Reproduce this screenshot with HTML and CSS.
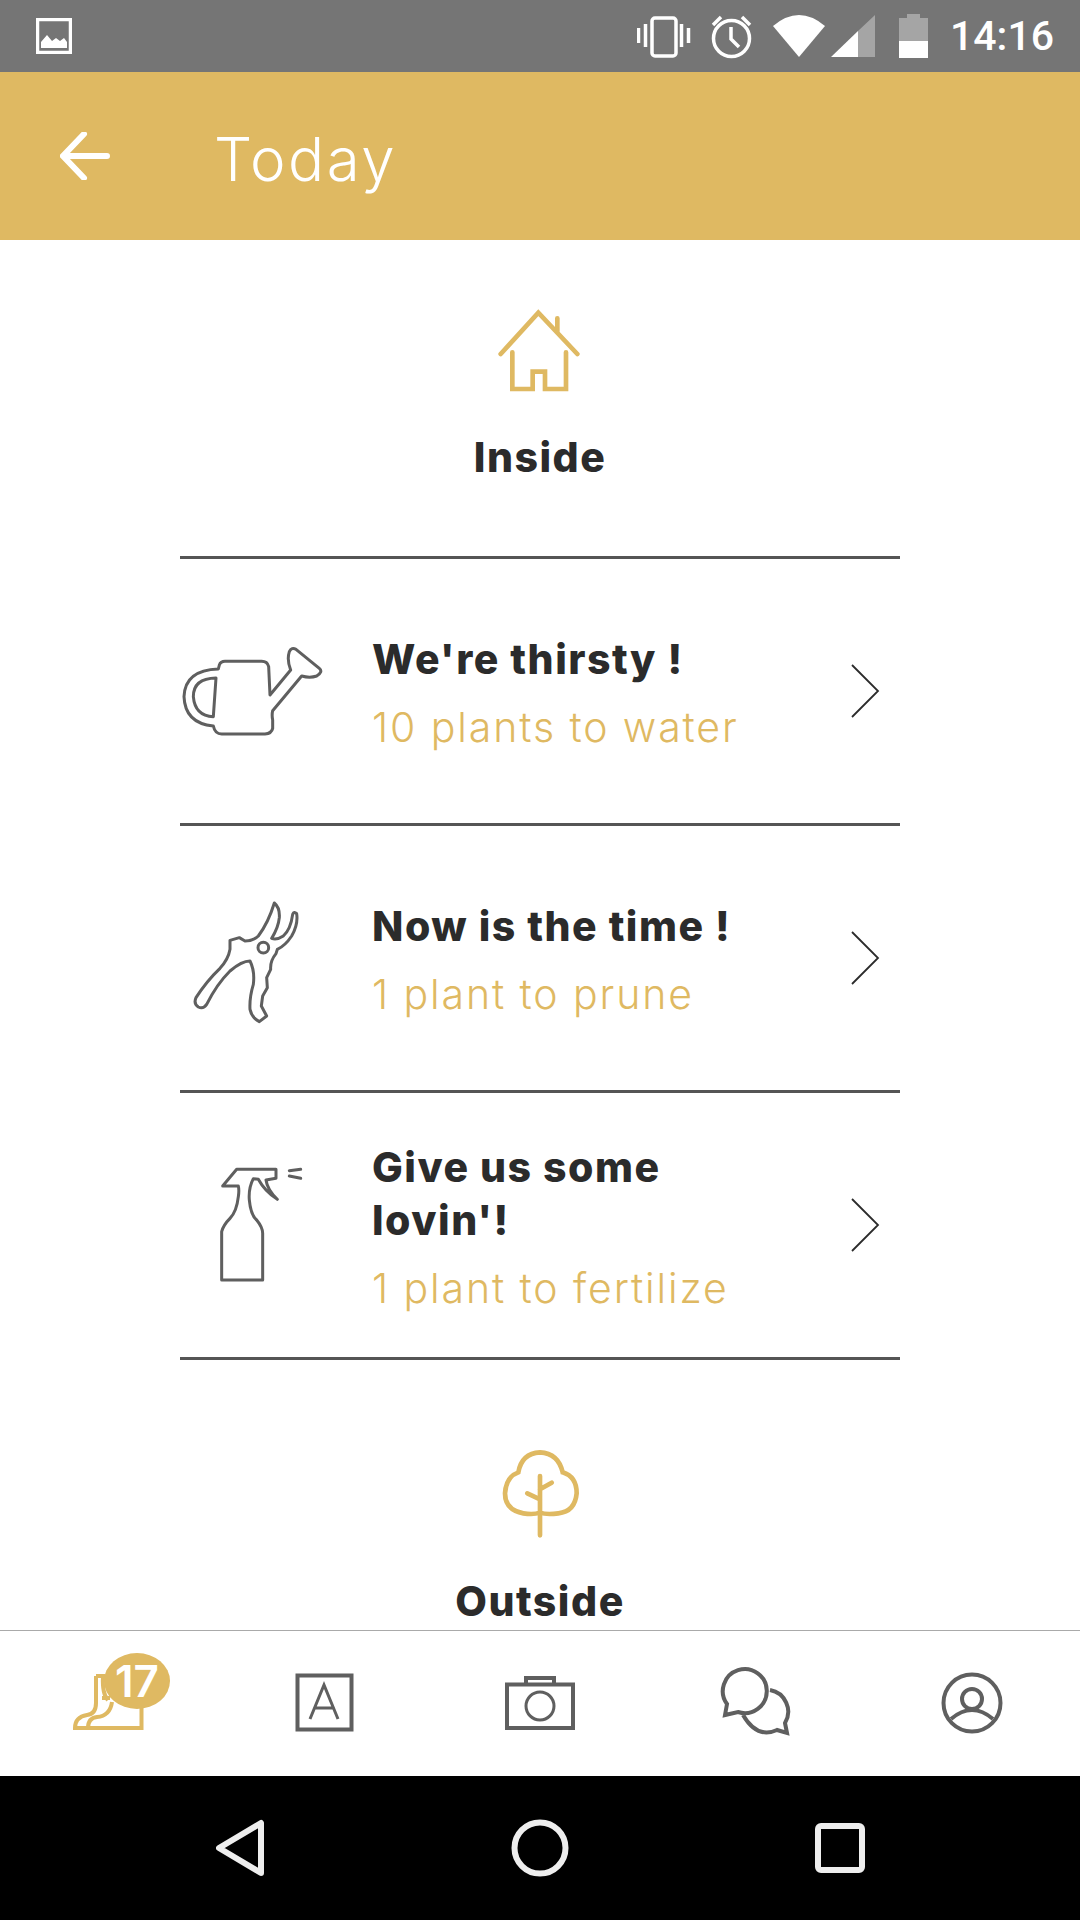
FILE: index.html
```html
<!DOCTYPE html>
<html lang="en">
<head>
<meta charset="utf-8">
<title>Today</title>
<link rel="stylesheet" href="styles.css">
</head>
<body>
<div class="app">
  <div class="statusbar">
    <svg class="st-image" viewBox="36 18 36 36"><rect x="37.500" y="19.500" width="33" height="33" class="w-line"/><path class="w-fill" d="M41 48V42L47 35L52 41L56 38L60 41L64 38L67 42V48Z"/></svg>
    <div class="st-right">
      <svg class="st-icons" viewBox="637 0 291 72">
        <rect x="652" y="18" width="24" height="38" rx="3" class="w-line"/>
        <path class="w-line" d="M638.500 28V43M645.500 24V47M681.500 24V47M688.500 28V43"/>
        <circle cx="731.500" cy="38.500" r="18" class="w-line"/>
        <path class="w-line" d="M731 27V39L739 47M713 25L721 17M750 25L742 17"/>
        <path class="w-fill" d="M773 26Q799 4 825 26L799 57Z"/>
        <path class="w-dim" d="M858 31L875 15V57H858Z"/>
        <path class="w-fill" d="M831 57L858 31V57Z"/>
        <path class="w-dim" d="M907 14H920V18H928V41H899V18H907Z"/>
        <rect x="899" y="41" width="29" height="17" class="w-fill"/>
      </svg>
      <span class="st-time">14:16</span>
    </div>
  </div>

  <header class="topbar">
    <svg class="back" viewBox="0 0 50 48"><path d="M47 24H4M24 2L3 24L24 46"/></svg>
    <h1 class="title">Today</h1>
  </header>

  <main class="content">
    <section class="group-head">
      <svg class="head-icon" viewBox="480 300 120 120"><g transform="translate(460 290) scale(.33333)"><path d="M122 192L235 68L352 192M292 85V125M157 187V297H218V245H255V297H318V187"/></g></svg>
      <h2 class="group-title">Inside</h2>
    </section>

    <ul class="tasks">
      <li class="task">
        <svg class="task-icon" viewBox="180 621 160 140"><g transform="translate(160 620) scale(.33333)"><path d="M178 135Q182 124 195 124H305Q322 124 326 140L330 225L392 150Q380 120 388 95Q395 80 408 88L478 145Q490 155 470 168Q450 175 425 168L338 272Q335 285 338 300V325Q335 340 315 342H185Q165 342 160 318Q75 310 72 230Q75 150 175 147ZM168 174Q100 175 100 230Q105 288 160 290Z"/></g></svg>
        <div class="task-text"><div class="task-title">We're thirsty !</div><div class="task-sub">10 plants to water</div></div>
        <svg class="chevron" viewBox="0 0 30 54"><path d="M2 1L28 27L2 53"/></svg>
      </li>
      <li class="task">
        <svg class="task-icon" viewBox="180 887 160 140"><g transform="translate(170 880) scale(.33333)"><path d="M313 66Q330 80 328 110Q325 140 305 172Q320 178 340 165Q362 145 368 100Q372 90 380 98Q385 130 365 165Q345 195 322 205L318 218Q300 240 302 265L290 290L292 320L278 345L274 375L290 405L268 422Q245 410 240 385Q238 350 250 310Q255 270 240 240Q215 240 180 270Q140 310 110 370Q100 385 85 378Q70 368 78 350Q110 300 150 262Q175 235 180 205V178L208 170L225 180Q250 180 265 165Q295 125 313 66Z"/><circle cx="280" cy="200" r="16"/></g></svg>
        <div class="task-text"><div class="task-title">Now is the time !</div><div class="task-sub">1 plant to prune</div></div>
        <svg class="chevron" viewBox="0 0 30 54"><path d="M2 1L28 27L2 53"/></svg>
      </li>
      <li class="task">
        <svg class="task-icon" viewBox="180 1155 160 140"><g transform="translate(190 1140) scale(.33333)"><path d="M140 88H258V115L228 120Q232 150 262 178Q225 155 205 118L190 116Q175 145 178 180Q182 225 200 240Q218 262 218 280V420H95V275Q100 255 120 235Q140 215 145 170Q148 150 145 138H98ZM298 92L332 88M298 108L332 115"/></g></svg>
        <div class="task-text"><div class="task-title">Give us some lovin'!</div><div class="task-sub">1 plant to fertilize</div></div>
        <svg class="chevron" viewBox="0 0 30 54"><path d="M2 1L28 27L2 53"/></svg>
      </li>
    </ul>

    <section class="group-head group-head-next">
      <svg class="head-icon" viewBox="480 1444 120 120"><g transform="translate(480 1430) scale(.33333)"><path d="M180 248Q160 255 130 250Q75 240 75 190Q78 140 115 127Q125 70 180 67Q235 70 248 127Q290 140 290 190Q285 245 235 250Q200 255 180 248ZM180 138V316M180 178L215 158M180 208L142 190"/></g></svg>
      <h2 class="group-title">Outside</h2>
    </section>
  </main>

  <nav class="tabs">
    <div class="tab">
      <svg class="tab-icon gold" viewBox="58 1654 100 100"><path d="M96 1676V1703Q96 1714 87 1715Q75 1717 75 1728H141.500V1700M96 1676H103Q102 1694 108 1700M112 1702Q110 1716 97 1717Q88 1718 88 1728M102 1698H110"/></svg>
      <span class="badge">17</span>
    </div>
    <div class="tab">
      <svg class="tab-icon" viewBox="274 1654 100 100"><rect x="297.500" y="1675.500" width="54" height="54"/><path class="thin" d="M310 1719L324 1685L338 1719M314 1708H334"/></svg>
    </div>
    <div class="tab">
      <svg class="tab-icon" viewBox="490 1654 100 100"><path d="M507 1684.500H573V1728H507ZM526 1684V1678H554V1684"/><ellipse class="thin" cx="540" cy="1706" rx="14" ry="14"/></svg>
    </div>
    <div class="tab">
      <svg class="tab-icon" viewBox="706 1654 100 100"><path d="M727 1704A22 22 0 1 1 738 1712L725 1715ZM770 1690A22 22 0 0 1 785 1723L787 1733L777 1730Q757 1739 743 1715"/></svg>
    </div>
    <div class="tab">
      <svg class="tab-icon" viewBox="922 1654 100 100"><circle cx="972" cy="1703" r="28.500"/><circle cx="972" cy="1699" r="10"/><path d="M951 1719Q972 1701 993 1719"/></svg>
    </div>
  </nav>

  <div class="sysnav">
    <svg class="sys sys-back" viewBox="0 0 48 58"><path d="M45 4V54L3 29Z"/></svg>
    <svg class="sys sys-home" viewBox="0 0 58 58"><circle cx="29" cy="29" r="25.500"/></svg>
    <svg class="sys sys-recent" viewBox="0 0 50 50"><rect x="3" y="3" width="44" height="44" rx="3"/></svg>
  </div>
</div>
</body>
</html>
```
FILE: styles.css
```css
* { box-sizing: border-box; }
html, body { margin: 0; padding: 0; }
body { font-family: "Inter", "Open Sans", sans-serif; background: #fff; }
.app { width: 1080px; height: 1920px; display: flex; flex-direction: column; overflow: hidden; }

.statusbar { height: 72px; background: #757575; display: flex; align-items: center; justify-content: space-between; padding: 0 26px 0 36px; flex: none; }
.st-image { width: 36px; height: 36px; }
.st-right { display: flex; align-items: center; gap: 22px; }
.st-icons { width: 291px; height: 72px; display: block; }
.st-time { font-family: "Roboto", sans-serif; font-weight: 500; font-size: 41px; color: #fff; line-height: 72px; }
.w-line { fill: none; stroke: #fff; stroke-width: 3.500; }
.w-fill { fill: #fff; }
.w-dim { fill: #fff; opacity: .35; }

.topbar { height: 168px; background: #dfb962; display: flex; align-items: center; padding-left: 60px; flex: none; }
.back { width: 50px; height: 48px; fill: none; stroke: #fff; stroke-width: 6; margin-right: 104px; }
.back path { stroke-linecap: round; }
.title { margin: 0; padding-top: 5px; font-size: 60px; letter-spacing: 2.500px; font-weight: 300; color: #fff; line-height: 1; }

.content { flex: 1; min-height: 0; overflow: hidden; }
.group-head { display: flex; flex-direction: column; align-items: center; padding: 60px 0 74px; }
.group-head-next { padding-top: 84px; }
.head-icon { width: 120px; height: 120px; fill: none; stroke: #dfb962; stroke-width: 14; stroke-linecap: round; }
.group-title { margin: 12px 0 0; font-size: 41px; letter-spacing: 1.500px; line-height: 50px; font-weight: 800; color: #2b2b2b; }

.tasks { list-style: none; margin: 0 180px; padding: 0; border-top: 3px solid #555; }
.task { height: 267px; border-bottom: 3px solid #555; display: flex; align-items: center; }
.task-icon { width: 160px; height: 140px; flex: none; margin-right: 32px; fill: none; stroke: #5f5f5f; stroke-width: 9; stroke-linejoin: round; stroke-linecap: round; }
.task-text { width: 400px; flex: none; }
.task-title { font-size: 41px; letter-spacing: 1.500px; line-height: 53px; font-weight: 800; color: #2b2b2b; }
.task-sub { font-size: 41px; letter-spacing: 1.900px; line-height: 43px; padding-top: 20px; font-weight: 300; color: #dfb962; }
.chevron { width: 30px; height: 54px; margin-left: 78px; flex: none; fill: none; stroke: #2b2b2b; stroke-width: 1.800; }

.tabs { height: 146px; flex: none; border-top: 1px solid #aaa; display: grid; grid-template-columns: repeat(5, 216px); background: #fff; }
.tab { position: relative; display: flex; align-items: center; justify-content: center; }
.tab-icon { width: 100px; height: 100px; fill: none; stroke: #5f5f5f; stroke-width: 4; }
.tab-icon.gold { stroke: #dfb962; }
.tab-icon .thin { stroke-width: 3; }
.badge { position: absolute; left: 104px; top: 22px; width: 66px; height: 56px; border-radius: 50%; background: #dfb962; color: #fff; font-size: 44px; font-weight: 600; line-height: 56px; text-align: center; }

.sysnav { height: 144px; flex: none; background: #000; display: grid; grid-template-columns: repeat(3, 300px); align-items: center; padding: 0 90px; }
.sys { fill: none; stroke: #eee; stroke-width: 6; justify-self: center; stroke-linejoin: round; }
.sys-back { width: 48px; height: 58px; }
.sys-home { width: 58px; height: 58px; }
.sys-recent { width: 50px; height: 50px; }
```
